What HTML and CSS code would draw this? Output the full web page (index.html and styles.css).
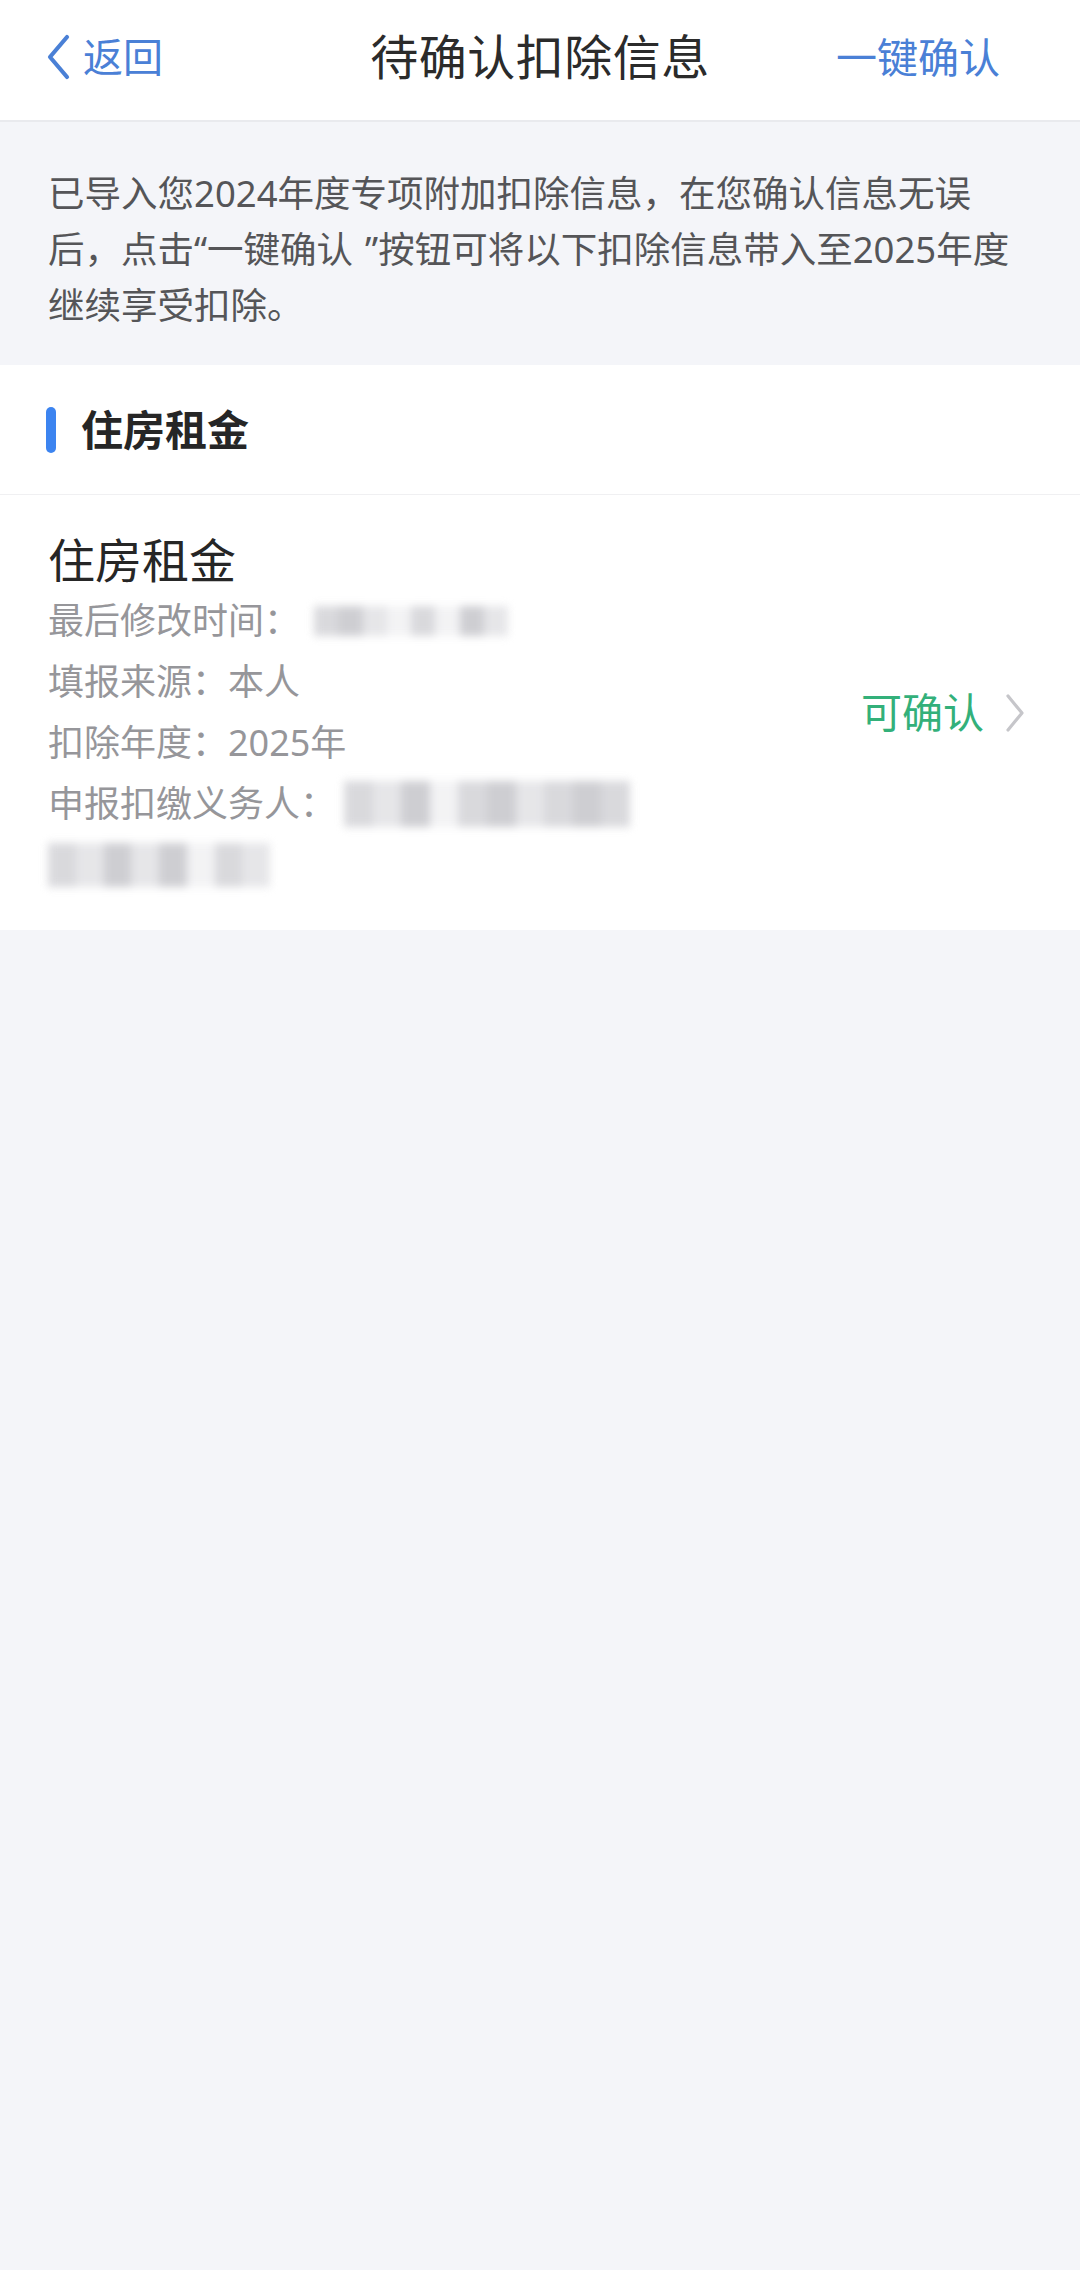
FILE: index.html
```html
<!DOCTYPE html>
<html lang="zh-CN">
<head>
<meta charset="utf-8">
<title>待确认扣除信息</title>
<link rel="stylesheet" href="styles.css">
</head>
<body>
<div class="page">
  <header class="nav">
    <div class="nav-left">
      <svg class="back-icon" viewBox="0 0 26 46" width="26" height="46"><path d="M22 3 L5 23 L22 43" fill="none" stroke="#4a80d6" stroke-width="4.2" stroke-linecap="round" stroke-linejoin="round"/></svg>
      <span class="back-text">返回</span>
    </div>
    <div class="nav-title">待确认扣除信息</div>
    <div class="nav-right">一键确认</div>
  </header>

  <div class="notice">已导入您2024年度专项附加扣除信息，在您确认信息无误<br>后，点击“一键确认<span class="q-gap"></span>”按钮可将以下扣除信息带入至2025年度<br>继续享受扣除。</div>

  <div class="section-head">
    <span class="bar"></span>
    <span class="section-title">住房租金</span>
  </div>

  <div class="item">
    <div class="item-main">
      <div class="item-title">住房租金</div>
      <div class="row">最后修改时间：<span class="mosaic m-time"><i class="c2"></i><i class="c3"></i><i class="c1"></i><i class="c0"></i><i class="c2"></i><i class="c0"></i><i class="c3"></i><i class="c1"></i></span></div>
      <div class="row">填报来源：本人</div>
      <div class="row">扣除年度：2025年</div>
      <div class="row">申报扣缴义务人：<span class="mosaic m-agent"><i class="c2"></i><i class="c1"></i><i class="c3"></i><i class="c0"></i><i class="c2"></i><i class="c3"></i><i class="c1"></i><i class="c2"></i><i class="c3"></i><i class="c2"></i></span></div>
      <div class="row"><span class="mosaic m-agent2"><i class="c2"></i><i class="c1"></i><i class="c3"></i><i class="c1"></i><i class="c3"></i><i class="c0"></i><i class="c2"></i><i class="c1"></i></span></div>
    </div>
    <div class="item-status">
      <span class="status-text">可确认</span>
      <svg class="chev" viewBox="0 0 20 40" width="20" height="40"><path d="M3 3 L17 20 L3 37" fill="none" stroke="#c6c6ca" stroke-width="3.2" stroke-linecap="round" stroke-linejoin="round"/></svg>
    </div>
  </div>
</div>
</body>
</html>
```

FILE: styles.css
```css
html, body {
  margin: 0;
  padding: 0;
}

body {
  background: #f4f5f9;
  font-family: "Noto Sans", "Noto Sans CJK SC", sans-serif;
  color: #333;
}

.page {
  min-height: 2270px;
  background: #f4f5f9;
}

.nav {
  box-sizing: border-box;
  height: 122px;
  padding: 0 45px 6px 45px;
  background: #ffffff;
  border-bottom: 2px solid #e9eaee;
  display: grid;
  grid-template-columns: 1fr auto 1fr;
  align-items: center;
}

.nav-left {
  display: flex;
  align-items: center;
  gap: 12px;
  justify-self: start;
  color: #4a80d6;
}

.back-icon {
  display: block;
}

.back-text {
  font-size: 40px;
  line-height: 1;
}

.nav-title {
  font-size: 48px;
  color: #2b2b2b;
  line-height: 1;
  letter-spacing: 0.5px;
}

.nav-right {
  justify-self: end;
  padding-right: 35px;
  font-size: 41px;
  color: #4a80d6;
  line-height: 1;
}

.notice {
  box-sizing: border-box;
  height: 243px;
  padding: 43px 40px 0 48px;
  font-size: 36.5px;
  line-height: 56px;
  color: #555558;
  white-space: nowrap;
}

.q-gap {
  display: inline-block;
  width: 12px;
}

.section-head {
  box-sizing: border-box;
  height: 130px;
  background: #ffffff;
  border-bottom: 1px solid #f0f0f2;
  display: flex;
  align-items: center;
  padding-left: 46px;
  gap: 25px;
}

.bar {
  width: 10px;
  height: 46px;
  border-radius: 5px;
  background: #3c84f0;
}

.section-title {
  font-size: 42px;
  font-weight: 700;
  color: #262626;
  line-height: 1;
}

.item {
  box-sizing: border-box;
  height: 435px;
  background: #ffffff;
  display: flex;
  align-items: center;
  justify-content: space-between;
  padding: 0 55px 0 48px;
}

.item-main {
  display: flex;
  flex-direction: column;
}

.item-title {
  font-size: 47px;
  line-height: 60px;
  color: #262626;
}

.row {
  font-size: 36px;
  line-height: 61px;
  height: 61px;
  color: #96969a;
  display: flex;
  align-items: center;
  white-space: nowrap;
}

.mosaic {
  display: flex;
  filter: blur(4px);
  opacity: 0.85;
}

.mosaic i {
  display: block;
  height: 100%;
  flex: 1;
}

.m-time {
  width: 194px;
  height: 30px;
  margin-left: 14px;
}

.m-agent {
  width: 286px;
  height: 46px;
  margin-left: 8px;
}

.m-agent2 {
  width: 222px;
  height: 44px;
}

.c0 { background: #f1f1f3; }
.c1 { background: #e2e2e5; }
.c2 { background: #d3d3d7; }
.c3 { background: #c6c6cb; }

.item-status {
  display: flex;
  align-items: center;
  gap: 21px;
}

.status-text {
  font-size: 41px;
  color: #33b07a;
  line-height: 1;
}

.chev {
  display: block;
}
```
